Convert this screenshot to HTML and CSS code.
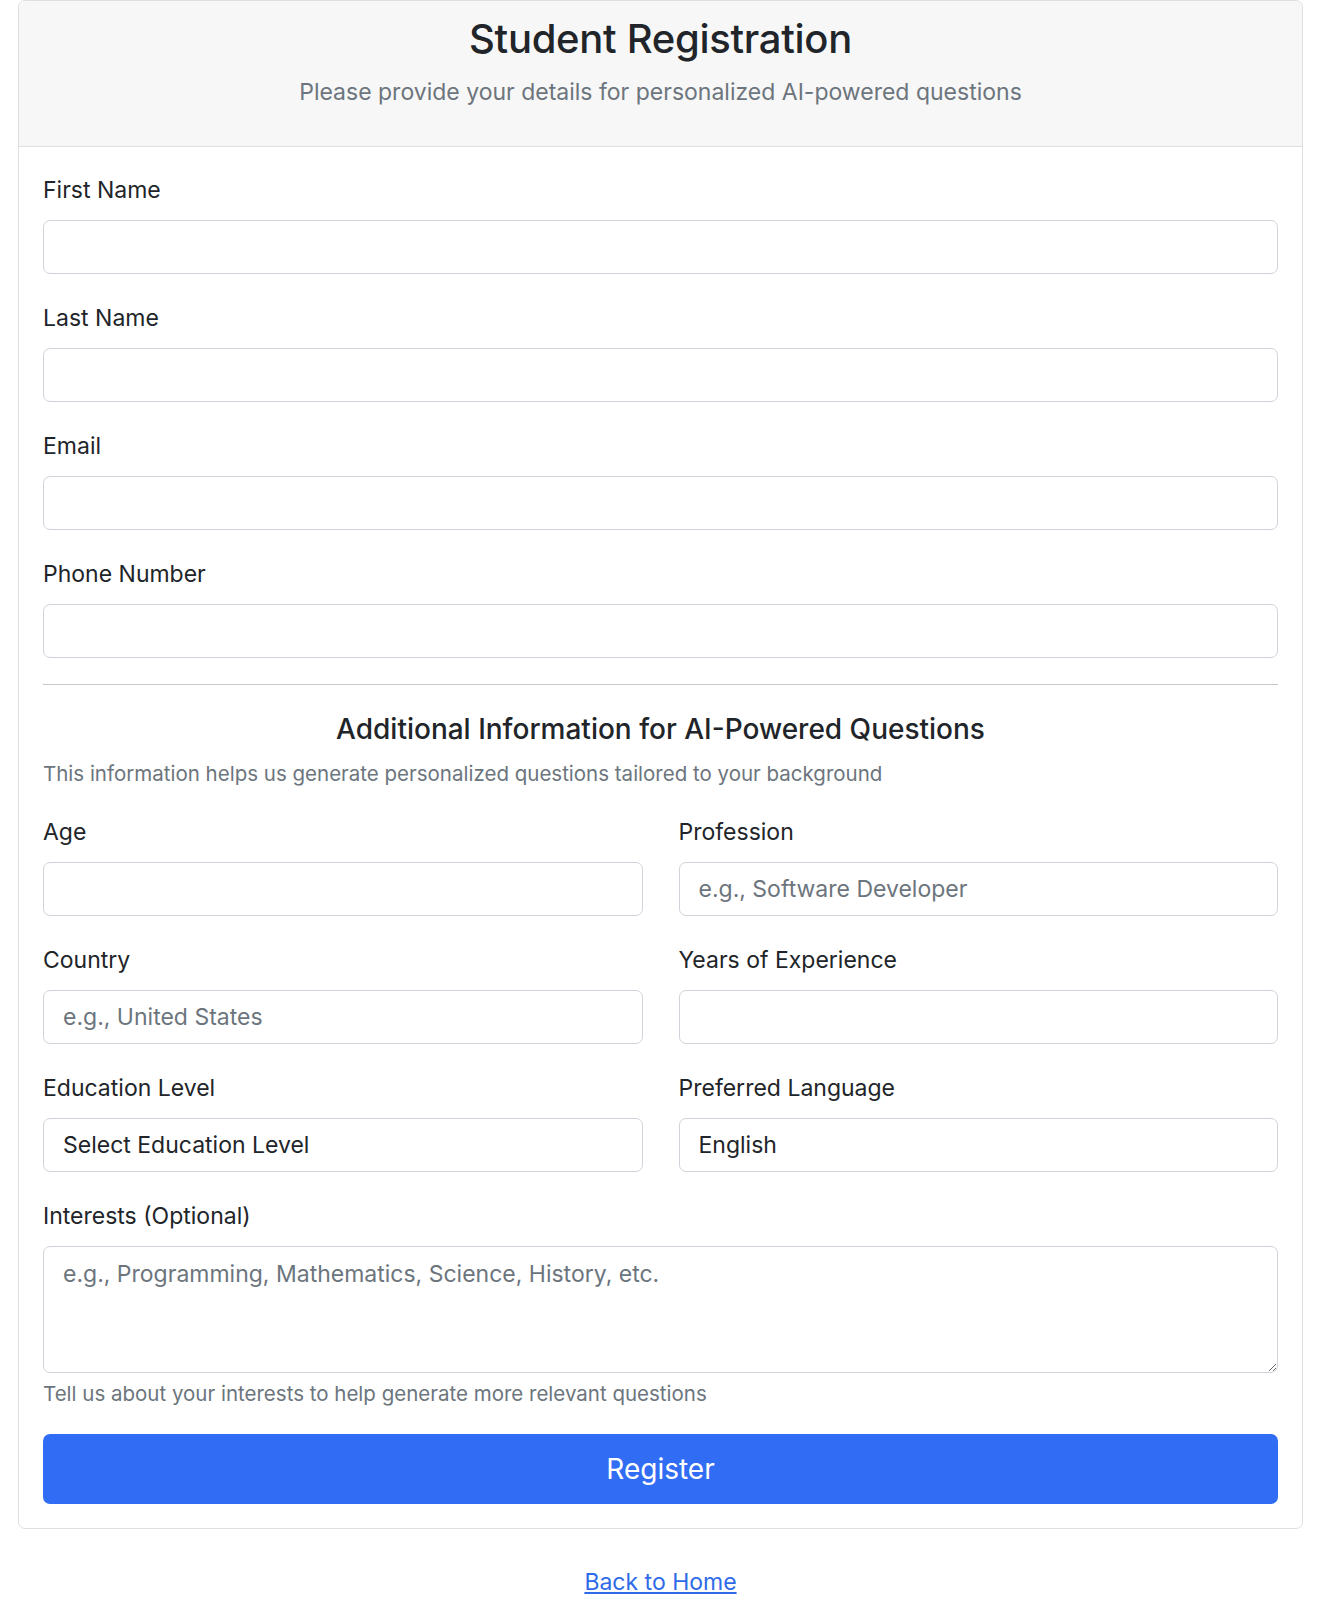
FILE: index.html
```html
<!DOCTYPE html>
<html>
<head>
    <link rel="stylesheet" href="styles.css">
</head>
<body>
    <div class="page">
        <div class="card">
            <div class="card-header">
                <h2>Student Registration</h2>
                <p class="lead">Please provide your details for personalized AI-powered questions</p>
            </div>

            <form class="card-body">
                <div class="field">
                    <label for="firstName">First Name</label>
                    <input type="text" id="firstName" class="form-control">
                </div>
                <div class="field">
                    <label for="lastName">Last Name</label>
                    <input type="text" id="lastName" class="form-control">
                </div>
                <div class="field">
                    <label for="email">Email</label>
                    <input type="email" id="email" class="form-control">
                </div>
                <div class="field field-tight">
                    <label for="phone">Phone Number</label>
                    <input type="tel" id="phone" class="form-control">
                </div>

                <hr>

                <h4 class="section-title">Additional Information for AI-Powered Questions</h4>
                <p class="muted section-note">This information helps us generate personalized questions tailored to your background</p>

                <div class="row">
                    <div class="field">
                        <label for="age">Age</label>
                        <input type="number" id="age" class="form-control">
                    </div>
                    <div class="field">
                        <label for="profession">Profession</label>
                        <input type="text" id="profession" class="form-control" placeholder="e.g., Software Developer">
                    </div>
                </div>

                <div class="row">
                    <div class="field">
                        <label for="country">Country</label>
                        <input type="text" id="country" class="form-control" placeholder="e.g., United States">
                    </div>
                    <div class="field">
                        <label for="experience">Years of Experience</label>
                        <input type="number" id="experience" class="form-control">
                    </div>
                </div>

                <div class="row">
                    <div class="field">
                        <label for="education">Education Level</label>
                        <select id="education" class="form-control">
                            <option>Select Education Level</option>
                            <option>High School</option>
                            <option>Bachelor's Degree</option>
                            <option>Master's Degree</option>
                            <option>PhD</option>
                        </select>
                    </div>
                    <div class="field">
                        <label for="language">Preferred Language</label>
                        <select id="language" class="form-control">
                            <option>English</option>
                            <option>Spanish</option>
                            <option>French</option>
                        </select>
                    </div>
                </div>

                <div class="field">
                    <label for="interests">Interests (Optional)</label>
                    <textarea id="interests" class="form-control" placeholder="e.g., Programming, Mathematics, Science, History, etc."></textarea>
                    <div class="muted help">Tell us about your interests to help generate more relevant questions</div>
                </div>

                <button type="submit" class="button">Register</button>
            </form>
        </div>

        <div class="back">
            <a href="#">Back to Home</a>
        </div>
    </div>
</body>
</html>
```

FILE: styles.css
```css
body {
    margin: 0;
    font-family: Inter, "Noto Sans", sans-serif;
    color: #212529;
    background: white;
}

.page {
    padding: 0 39px 20px 18px;
}

.card {
    border: 1px solid #dfdfdf;
    border-radius: 7px;
    background: white;
    overflow: hidden;
}

.card-header {
    background: #f7f7f7;
    border-bottom: 1px solid #dfdfdf;
    text-align: center;
    padding: 14px 24px 15px;
}

.card-header h2 {
    margin: 0 0 12px;
    font-size: 40px;
    font-weight: 500;
    line-height: 48px;
    letter-spacing: -0.3px;
}

.lead {
    margin: 0 0 22px;
    font-size: 23px;
    line-height: 34px;
    color: #6c757d;
}

.card-body {
    padding: 26px 24px 24px;
}

.field {
    margin-bottom: 27px;
}

.field-tight {
    margin-bottom: 26px;
}

.field label {
    display: block;
    font-size: 23px;
    line-height: 34px;
    margin-bottom: 13px;
}

.form-control {
    display: block;
    box-sizing: border-box;
    width: 100%;
    height: 54px;
    padding: 0 19px;
    font-family: inherit;
    font-size: 23px;
    color: #212529;
    background: white;
    border: 1px solid #ced4da;
    border-radius: 7px;
    outline: none;
    appearance: none;
    -webkit-appearance: none;
    -moz-appearance: textfield;
}

.form-control::placeholder {
    color: #6c757d;
}

textarea.form-control {
    height: 127px;
    padding: 10px 19px;
    line-height: 34px;
    resize: vertical;
}

hr {
    border: none;
    border-top: 1.5px solid #c6c7c8;
    margin: 0 0 27px;
}

.section-title {
    margin: 0 0 12px;
    text-align: center;
    font-size: 28px;
    font-weight: 500;
    line-height: 34px;
}

.muted {
    color: #6c757d;
    font-size: 20.5px;
    line-height: 31px;
}

.section-note {
    margin: 0 0 26px;
}

.row {
    display: grid;
    grid-template-columns: 1fr 1fr;
    column-gap: 36px;
}

.help {
    margin-top: 5px;
}

.field:has(.help) {
    margin-bottom: 25px;
}

.button {
    display: block;
    width: 100%;
    height: 70px;
    font-family: inherit;
    font-size: 28px;
    color: white;
    background: #316cf4;
    border: none;
    border-radius: 7px;
    cursor: pointer;
}

.button:hover {
    background: #2a5dd4;
}

.back {
    text-align: center;
    margin-top: 36px;
}

.back a {
    color: #2f6be8;
    font-size: 23px;
    line-height: 34px;
}
```
